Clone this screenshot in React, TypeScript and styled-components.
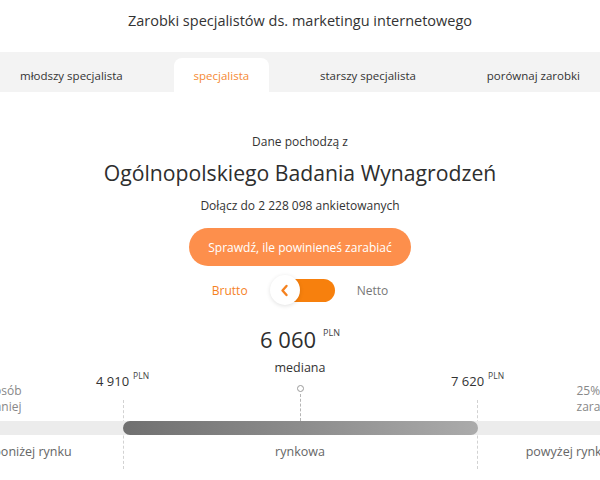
import React, { useState } from "react";
import styled, { createGlobalStyle, css } from "styled-components";

const ORANGE = "#f5821f";

const GlobalStyle = createGlobalStyle`
  body {
    margin: 0;
    background: #ffffff;
    font-family: "Open Sans", "Liberation Sans", sans-serif;
    color: #333333;
    overflow: hidden;
  }
`;

interface Range {
  low: number;
  median: number;
  high: number;
}

const salary: Range = { low: 4910, median: 6060, high: 7620 };

const tabs = ["młodszy specjalista", "specjalista", "starszy specjalista", "porównaj zarobki"];

// 4910 -> "4 910"
const formatPln = (n: number) => n.toString().replace(/\B(?=(\d{3})+(?!\d))/g, " ");

const App = () => {
  const [activeTab, setActiveTab] = useState(1);
  const [gross, setGross] = useState(true);

  return (
    <Page>
      <GlobalStyle />
      <Title>Zarobki specjalistów ds. marketingu internetowego</Title>

      <TabBar>
        {tabs.map((label, i) => (
          <Tab key={label} $active={i === activeTab} onClick={() => setActiveTab(i)}>
            {label}
          </Tab>
        ))}
      </TabBar>

      <Intro>
        <Lead>Dane pochodzą z</Lead>
        <Headline>Ogólnopolskiego Badania Wynagrodzeń</Headline>
        <Joined>Dołącz do 2 228 098 ankietowanych</Joined>
        <CtaButton type="button">Sprawdź, ile powinieneś zarabiać</CtaButton>

        <ToggleRow>
          <ToggleLabel $on={gross}>Brutto</ToggleLabel>
          <SwitchTrack onClick={() => setGross(!gross)}>
            <SwitchKnob>
              <svg width="9" height="13" viewBox="0 0 9 13">
                <polyline
                  points="6.5,2 2.5,6.5 6.5,11"
                  fill="none"
                  stroke={ORANGE}
                  strokeWidth="2.4"
                  strokeLinecap="round"
                  strokeLinejoin="round"
                />
              </svg>
            </SwitchKnob>
          </SwitchTrack>
          <ToggleLabel $on={!gross}>Netto</ToggleLabel>
        </ToggleRow>

        <MedianValue>
          {formatPln(salary.median)}
          <Currency $big>PLN</Currency>
        </MedianValue>
        <MedianLabel>mediana</MedianLabel>
      </Intro>

      <ScaleViewport>
        <Scale>
          <Note $side="left">
            25% osób
            <br />
            zarabia mniej
          </Note>
          <Note $side="right">
            25% osób
            <br />
            zarabia więcej
          </Note>

          <ValueTag $edge="start">
            {formatPln(salary.low)}
            <Currency>PLN</Currency>
          </ValueTag>
          <ValueTag $edge="end">
            {formatPln(salary.high)}
            <Currency>PLN</Currency>
          </ValueTag>

          <Guides />
          <Track />
          <Fill />

          <MedianMark>
            <Dot />
            <Stem />
          </MedianMark>

          <Caption $col={1}>poniżej rynku</Caption>
          <Caption $col={2}>rynkowa</Caption>
          <Caption $col={3}>powyżej rynku</Caption>
        </Scale>
      </ScaleViewport>
    </Page>
  );
};

const Page = styled.div`
  width: 600px;
  height: 480px;
  overflow: hidden;
`;

const Title = styled.h1`
  margin: 0;
  padding-top: 11px;
  font-size: 14.5px;
  line-height: 20px;
  font-weight: 400;
  text-align: center;
  color: #333;
`;

const TabBar = styled.nav`
  margin-top: 21px;
  height: 40px;
  background: #f3f3f3;
  display: flex;
  justify-content: space-between;
  align-items: flex-end;
`;

const Tab = styled.div<{ $active: boolean }>`
  height: 34px;
  padding: 0 20px;
  display: flex;
  align-items: center;
  font-size: 11.5px;
  color: #333;
  border-radius: 8px 8px 0 0;
  cursor: pointer;

  ${({ $active }) =>
    $active &&
    css`
      background: #ffffff;
      color: #f58a34;
    `}
`;

const Intro = styled.section`
  display: flex;
  flex-direction: column;
  align-items: center;
  text-align: center;
`;

const Lead = styled.p`
  margin: 41px 0 0;
  font-size: 12px;
  line-height: 18px;
`;

const Headline = styled.h2`
  margin: 7px 0 0;
  font-size: 21.2px;
  line-height: 30px;
  font-weight: 400;
  color: #2e2e2e;
`;

const Joined = styled.p`
  margin: 9px 0 0;
  font-size: 12px;
  line-height: 18px;
`;

const CtaButton = styled.button`
  margin-top: 13px;
  width: 222px;
  height: 38px;
  border: none;
  border-radius: 19px;
  background: #fd8f4c;
  color: #ffffff;
  font-family: inherit;
  font-size: 12px;
  cursor: pointer;
`;

const ToggleRow = styled.div`
  margin-top: 8px;
  height: 32px;
  display: flex;
  align-items: center;
  gap: 22px;
`;

const ToggleLabel = styled.span<{ $on: boolean }>`
  font-size: 12px;
  color: ${({ $on }) => ($on ? ORANGE : "#777")};
`;

const SwitchTrack = styled.div`
  position: relative;
  margin-left: 9px;
  width: 56px;
  height: 23px;
  border-radius: 12px;
  background: #f7800d;
  cursor: pointer;
`;

const SwitchKnob = styled.span`
  position: absolute;
  left: -9px;
  top: 50%;
  transform: translateY(-50%);
  width: 30px;
  height: 30px;
  border-radius: 50%;
  background: #ffffff;
  box-shadow: 0 1px 4px rgba(0, 0, 0, 0.12);
  display: flex;
  align-items: center;
  justify-content: center;
`;

const MedianValue = styled.div`
  margin-top: 12px;
  font-size: 22px;
  line-height: 30px;
  color: #2e2e2e;
`;

const Currency = styled.sup<{ $big?: boolean }>`
  margin-left: ${({ $big }) => ($big ? "7px" : "4px")};
  font-size: ${({ $big }) => ($big ? "9px" : "8.5px")};
  vertical-align: ${({ $big }) => ($big ? "12px" : "7px")};
  color: #444;
`;

const MedianLabel = styled.div`
  margin-top: 6px;
  font-size: 12.5px;
  line-height: 16px;
  color: #333;
`;

const ScaleViewport = styled.div`
  display: flex;
  justify-content: center;
  margin-top: -2px;
`;

const Scale = styled.div`
  display: grid;
  grid-template-columns: 180px 355px 180px;
  grid-template-rows: 26px 21px 14px 30px;
  flex-shrink: 0;
`;

const Note = styled.div<{ $side: "left" | "right" }>`
  grid-row: 1 / 3;
  grid-column: ${({ $side }) => ($side === "left" ? 1 : 3)};
  align-self: end;
  margin-bottom: 6px;
  font-size: 12px;
  line-height: 16px;
  color: #888;
  white-space: nowrap;
  ${({ $side }) =>
    $side === "left"
      ? css`
          text-align: right;
          padding-right: 101px;
        `
      : css`
          text-align: left;
          padding-left: 99px;
        `}
`;

const ValueTag = styled.div<{ $edge: "start" | "end" }>`
  grid-row: 1;
  grid-column: 2;
  justify-self: ${({ $edge }) => $edge};
  transform: translateX(${({ $edge }) => ($edge === "start" ? "-50%" : "50%")});
  margin-top: -7px;
  font-size: 13px;
  line-height: 18px;
  color: #333;
  white-space: nowrap;
`;

const Guides = styled.div`
  grid-row: 2 / 5;
  grid-column: 2;
  margin-bottom: -4px;
  border-left: 1px dashed #d2d2d2;
  border-right: 1px dashed #d2d2d2;
`;

const Track = styled.div`
  grid-row: 3;
  grid-column: 1 / 4;
  background: #ececec;
`;

const Fill = styled.div`
  grid-row: 3;
  grid-column: 2;
  border-radius: 7px;
  background: linear-gradient(90deg, #707070 0%, #8c8c8c 50%, #ababab 100%);
`;

const MedianMark = styled.div`
  grid-row: 1 / 3;
  grid-column: 2;
  justify-self: center;
  display: flex;
  flex-direction: column;
  align-items: center;
  padding-top: 11px;
`;

const Dot = styled.span`
  width: 7px;
  height: 7px;
  box-sizing: border-box;
  border: 1px solid #9a9a9a;
  border-radius: 50%;
`;

const Stem = styled.span`
  flex: 1;
  margin-top: 2px;
  border-left: 1px dashed #b5b5b5;
`;

const Caption = styled.div<{ $col: number }>`
  grid-row: 4;
  grid-column: ${({ $col }) => $col};
  text-align: center;
  padding-top: 8px;
  font-size: 12.5px;
  line-height: 18px;
  color: #666;
  white-space: nowrap;
`;

export default App;
